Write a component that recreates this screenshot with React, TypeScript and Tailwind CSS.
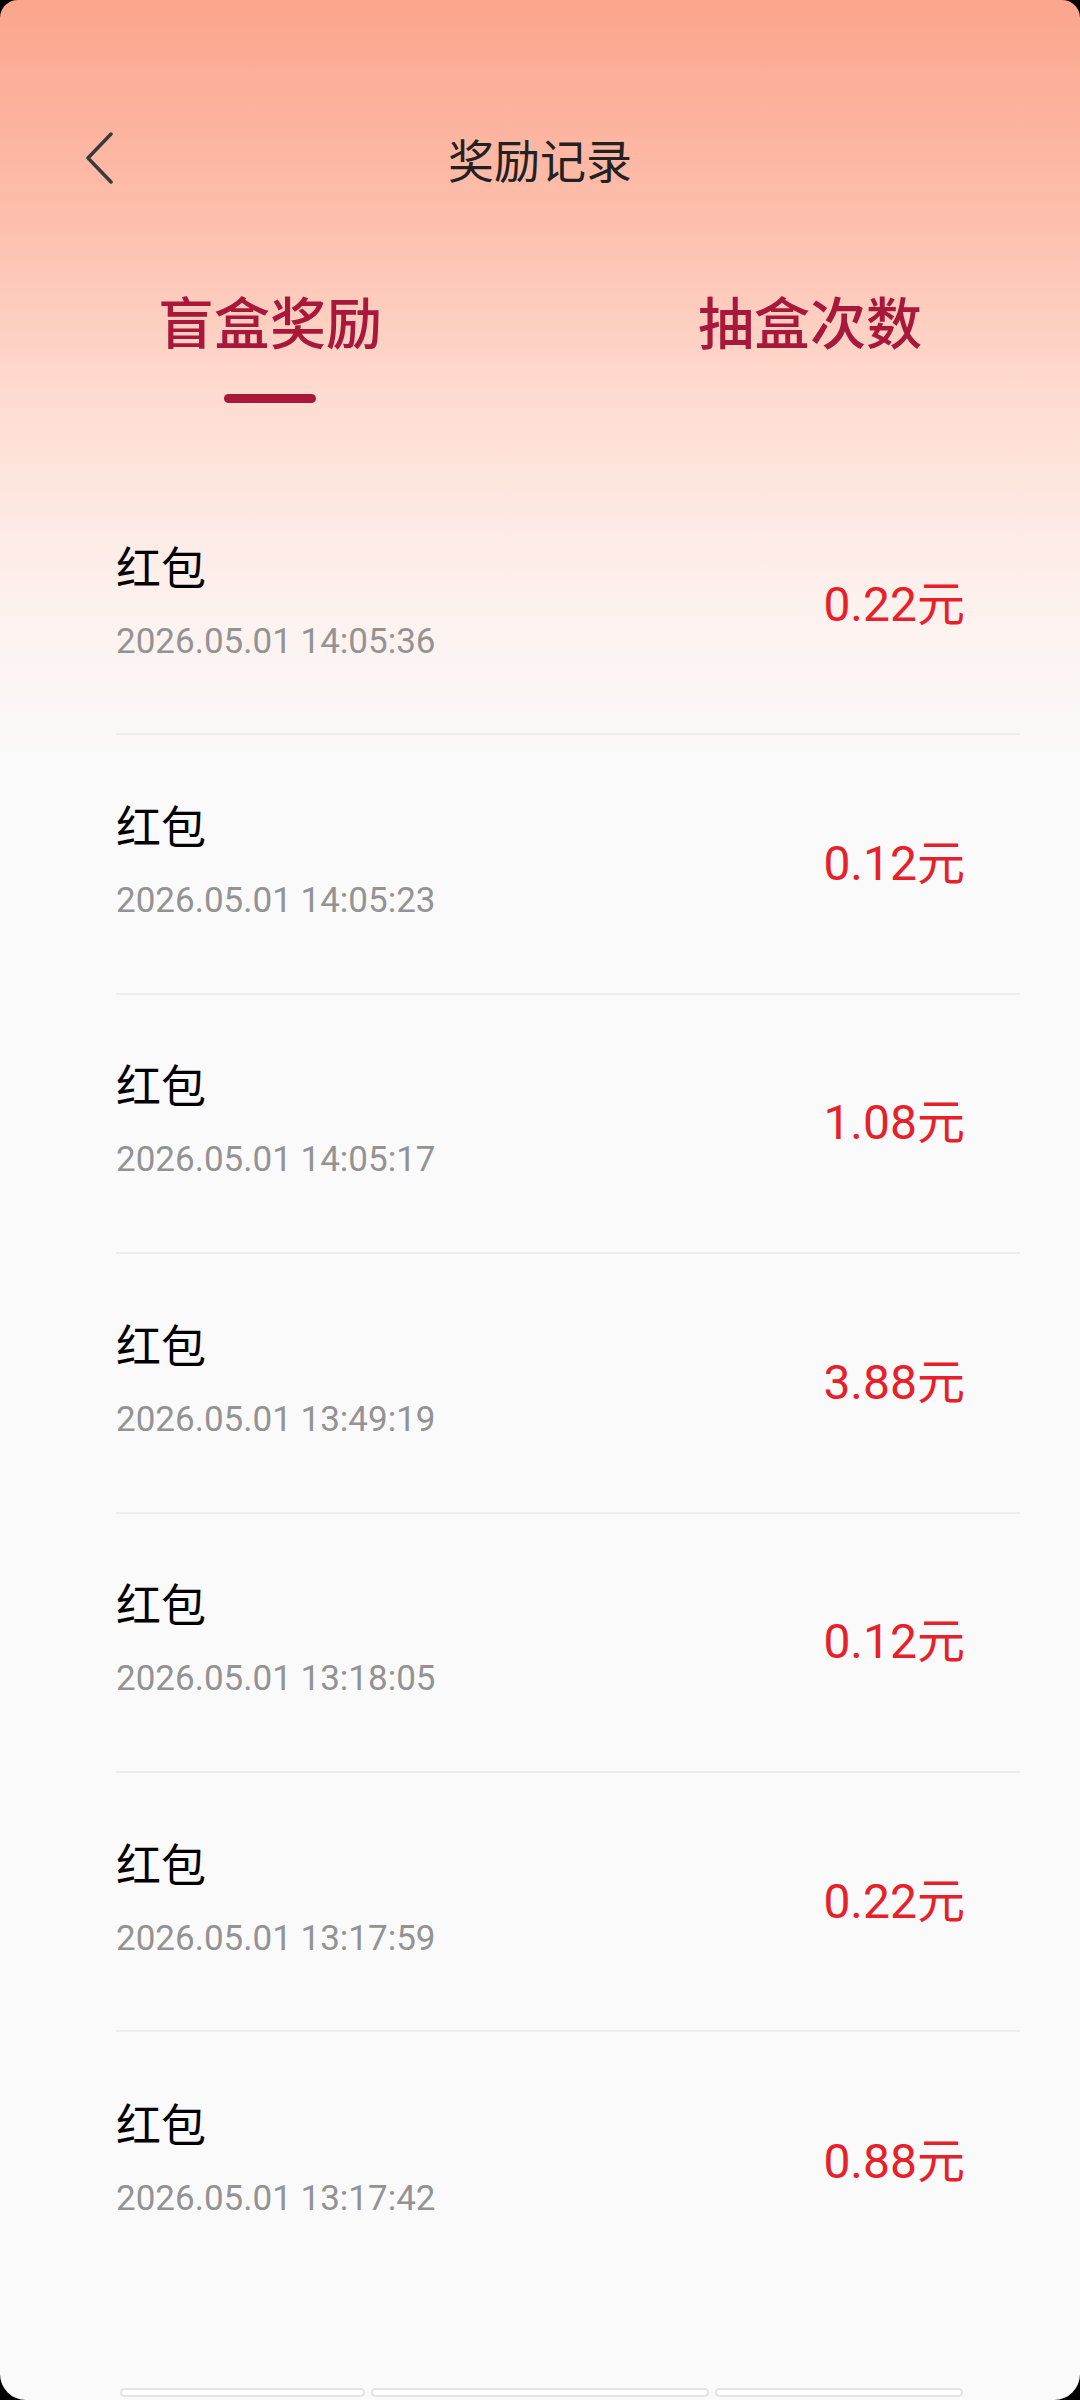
const RECORDS = [
  { time: "2026.05.01 14:05:36", amount: "0.22" },
  { time: "2026.05.01 14:05:23", amount: "0.12" },
  { time: "2026.05.01 14:05:17", amount: "1.08" },
  { time: "2026.05.01 13:49:19", amount: "3.88" },
  { time: "2026.05.01 13:18:05", amount: "0.12" },
  { time: "2026.05.01 13:17:59", amount: "0.22" },
  { time: "2026.05.01 13:17:42", amount: "0.88" },
];

const CJK = "font-['Noto_Sans_CJK_SC',sans-serif]";
const NUM = "font-['Roboto','Noto_Sans_CJK_SC',sans-serif]";

export default function App() {
  return (
    <div className="w-[1080px] h-[2400px] bg-black">
      <div className="relative flex h-full flex-col overflow-hidden rounded-t-[18px] rounded-b-[26px] bg-[#fafafa] bg-[linear-gradient(180deg,#fba58c_0px,#fdc0ae_230px,#fee0d7_430px,#fdf0ec_590px,#fafafa_760px)]">
        {/* header */}
        <div className="mt-[120px] flex h-[76px] items-center px-[84px]">
          <svg width="30" height="52" viewBox="0 0 30 52" className="shrink-0">
            <path d="M27 2 L4 26 L27 50" fill="none" stroke="#3a3a3a" strokeWidth="3.5" strokeLinecap="round" strokeLinejoin="round" />
          </svg>
          <div className={`flex-1 pr-[30px] text-center text-[46px] leading-none text-[#222] ${CJK}`}>奖励记录</div>
        </div>

        {/* tabs */}
        <div className="mt-[92px] flex">
          <div className="flex w-1/2 flex-col items-center">
            <span className={`text-[56px] leading-[64px] font-medium text-[#a8183a] ${CJK}`}>盲盒奖励</span>
            <span className="mt-[42px] h-[9px] w-[92px] rounded-full bg-[#a8183a]" />
          </div>
          <div className="flex w-1/2 flex-col items-center">
            <span className={`text-[56px] leading-[64px] font-medium text-[#a8183a] ${CJK}`}>抽盒次数</span>
          </div>
        </div>

        {/* list */}
        <div className="mx-[116px] mr-[60px] mt-[73px] flex flex-col">
          {RECORDS.map((r, i) => (
            <div
              key={i}
              className={`flex h-[259.4px] items-center justify-between pr-[55px] ${i < RECORDS.length - 1 ? "border-b-[2px] border-[#ececec]" : ""}`}
            >
              <div className="mb-[8px] flex flex-col">
                <span className={`text-[45px] leading-[54px] text-black ${CJK}`}>红包</span>
                <span className={`mt-[28px] text-[35px] leading-[42px] text-[#939393] ${NUM}`}>{r.time}</span>
              </div>
              <span className={`text-[48px] leading-none text-[#e62129] ${NUM}`}>
                {r.amount}元
              </span>
            </div>
          ))}
        </div>

        {/* bottom bar */}
        <div className="mt-auto mb-[3px] flex justify-center gap-[6px] pl-[2px]">
          <span className="h-[9px] w-[245px] rounded-full border-2 border-[#e4e4e4] bg-white" />
          <span className="h-[9px] w-[338px] rounded-full border-2 border-[#e4e4e4] bg-white" />
          <span className="h-[9px] w-[248px] rounded-full border-2 border-[#e4e4e4] bg-white" />
        </div>
      </div>
    </div>
  );
}
